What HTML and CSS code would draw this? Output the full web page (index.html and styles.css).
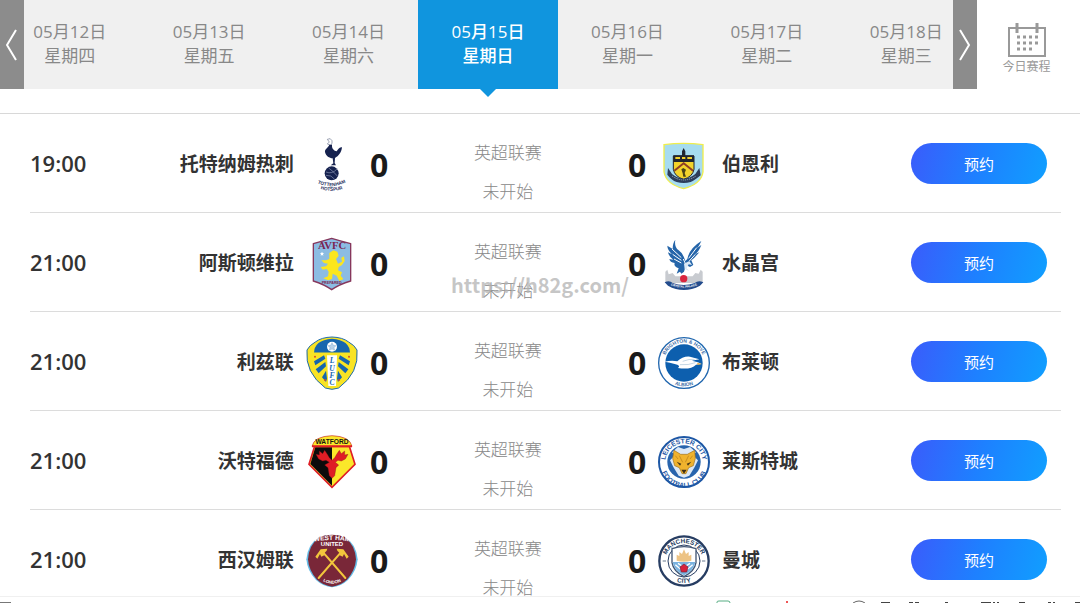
FILE: index.html
```html
<!DOCTYPE html>
<html lang="zh-CN">
<head>
  <meta charset="UTF-8">
  <meta name="viewport" content="width=device-width, initial-scale=1">
  <title>英超赛程</title>
  <link rel="stylesheet" href="styles.css">
</head>
<body>
  <header class="schedule-header">
    <nav class="date-strip">
      <button type="button" class="arrow prev" aria-label="前一周">
        <svg width="12" height="34" viewBox="0 0 12 34"><path d="M10 2 L1 17 L10 32"/></svg>
      </button>
      <div class="dates">
        <a href="#" class="date"><span>05月12日</span><span>星期四</span></a>
        <a href="#" class="date"><span>05月13日</span><span>星期五</span></a>
        <a href="#" class="date"><span>05月14日</span><span>星期六</span></a>
        <a href="#" class="date active"><span>05月15日</span><span>星期日</span></a>
        <a href="#" class="date"><span>05月16日</span><span>星期一</span></a>
        <a href="#" class="date"><span>05月17日</span><span>星期二</span></a>
        <a href="#" class="date"><span>05月18日</span><span>星期三</span></a>
      </div>
      <button type="button" class="arrow next" aria-label="后一周">
        <svg width="12" height="34" viewBox="0 0 12 34"><path d="M1 2 L10 17 L1 32"/></svg>
      </button>
    </nav>
    <a href="#" class="today">
      <svg width="38" height="35" viewBox="0 0 38 35">
        <rect x="1" y="5" width="36" height="28" fill="none" stroke="#999" stroke-width="2"/>
        <path d="M9 0V10M29 0V10" stroke="#999" stroke-width="3"/>
        <path d="M9 14H32M9 20H32M9 26H26" stroke="#999" stroke-width="3" stroke-dasharray="3 3"/>
      </svg>
      <span>今日赛程</span>
    </a>
  </header>

  <main class="matches">
    <div class="match">
      <time>19:00</time>
      <span class="team home">托特纳姆热刺</span>
      <svg class="crest" viewBox="0 0 156 162">
        <g fill="#16224f">
          <path d="M64 4Q74 -2 78 8Q80 16 74 22L64 18L70 12Z" fill="#fff" stroke="#6c7590" stroke-width="2"/>
          <path d="M70 20C66 30 56 32 57 42C60 55 70 60 80 61L82 76L74 82H90L86 75L87 60C98 54 106 44 108 28C100 26 96 34 92 40C84 38 77 32 78 20Z"/>
          <circle cx="77" cy="106" r="21"/>
          <path d="M60 102Q78 110 94 92M68 90Q84 102 94 114M60 112Q76 110 86 124" fill="none" stroke="#8c96b3" stroke-width="2"/>
        </g>
        <path id="spurs1" d="M36 136Q77 154 118 134" fill="none"/>
        <path id="spurs2" d="M38 151Q77 166 116 151" fill="none"/>
        <g class="lettering" font-size="14" fill="#28335e" text-anchor="middle">
          <text><textPath href="#spurs1" startOffset="50%">TOTTENHAM</textPath></text>
          <text><textPath href="#spurs2" startOffset="50%">HOTSPUR</textPath></text>
        </g>
      </svg>
      <strong class="score">0</strong>
      <div class="info"><span>英超联赛</span><span>未开始</span></div>
      <strong class="score">0</strong>
      <svg class="crest" viewBox="0 0 156 162">
        <path d="M18 20Q77 12 135 20V102Q130 138 77 152Q24 138 18 102Z" fill="#a6dcf0" stroke="#f0ee4c" stroke-width="4"/>
        <path d="M46 54H108V94Q104 116 77 124Q50 116 46 94Z" fill="#f3d32c" stroke="#1f2430" stroke-width="3"/>
        <path d="M46 52H108V72H46ZM72 40L77 30L82 40V52H72Z" fill="#22262f"/>
        <path d="M52 60H66M88 60H102M72 60H82" stroke="#f3d32c" stroke-width="6"/>
        <path d="M49 98L77 76L105 98" fill="none" stroke="#8f3f25" stroke-width="6"/>
        <path d="M70 94L76 90L84 95L80 105L84 116H76L74 106Z" fill="#4c4416"/>
        <path d="M30 90L42 108Q77 136 112 108L124 90L128 112Q106 130 98 132Q77 138 56 132Q40 126 28 110Z" fill="#2c3d59"/>
        <path d="M42 114Q77 138 114 114" fill="none" stroke="#aab7c6" stroke-width="3" stroke-dasharray="3 3"/>
      </svg>
      <span class="team">伯恩利</span>
      <button type="button" class="book">预约</button>
    </div>

    <div class="match">
      <time>21:00</time>
      <span class="team home">阿斯顿维拉</span>
      <svg class="crest" viewBox="0 0 156 162">
        <path d="M22 20Q50 12 77 4Q104 12 134 20V132Q100 142 77 158Q54 142 22 132Z" fill="#8cbce3" stroke="#86375c" stroke-width="4"/>
        <text class="serif" x="78" y="36" font-size="32" text-anchor="middle" fill="#7b2450">AVFC</text>
        <path d="M70 48L82 40L94 44L98 56L90 66L96 80L108 74L106 62L114 58L116 72L108 84L98 90L96 100L108 106L104 116L112 126L100 132L92 116L80 110L78 126L66 130L52 124L66 118L68 104L62 96L50 98L44 90L60 88L66 80L54 78L46 70L60 70L70 66Z" fill="#fbe61e"/>
        <path d="M48 44L50 48L54 49L51 52L52 56L48 54L44 56L45 52L42 49L46 48Z" fill="#fff"/>
        <text class="lettering" x="77" y="142" font-size="11" text-anchor="middle" fill="#7b2450">PREPARED</text>
      </svg>
      <strong class="score">0</strong>
      <div class="info"><span>英超联赛</span><span>未开始</span></div>
      <strong class="score">0</strong>
      <svg class="crest" viewBox="0 0 156 162">
        <path d="M22 104L28 98L32 112L44 108L52 118H104L112 108L122 110L128 98L134 104V138H22Z" fill="#c8cbd0"/>
        <g fill="#2565a9">
          <path d="M52 8Q48 30 62 40Q76 50 82 72L88 66Q94 34 130 12Q122 30 116 34L130 24Q122 46 110 52L124 46Q108 64 100 70L106 84L96 90L84 84L78 104L70 110L66 104L56 110L62 94Q46 88 50 78Q36 76 34 66L46 68Q32 58 30 46L42 52Q28 38 28 26L44 36Q44 18 52 8Z"/>
        </g>
        <path d="M42 36L70 62M44 52L70 70M48 66L70 78M92 64L116 32M94 72L112 52M76 66L84 84" fill="none" stroke="#fff" stroke-width="3"/>
        <path d="M78 80L94 72L102 84L92 82L86 94L94 102L80 96Z" fill="#dceaf6"/>
        <circle cx="77" cy="125" r="11" fill="#d9263f"/>
        <path d="M20 136Q34 128 44 138Q77 150 110 138Q122 128 136 136L126 146Q77 172 30 146Z" fill="#234c8d"/>
        <path id="palace" d="M30 141Q77 163 126 141" fill="none"/>
        <text class="lettering" font-size="9" fill="#fff" text-anchor="middle"><textPath href="#palace" startOffset="50%">CRYSTAL PALACE</textPath></text>
      </svg>
      <span class="team">水晶宫</span>
      <button type="button" class="book">预约</button>
    </div>

    <div class="match">
      <time>21:00</time>
      <span class="team home">利兹联</span>
      <svg class="crest" viewBox="0 0 156 162">
        <path d="M78 3Q110 4 128 18Q146 28 153 42Q160 110 98 156Q78 164 58 156Q-4 110 3 42Q10 28 28 18Q46 4 78 3Z" fill="#f8e324" stroke="#1d6bb1" stroke-width="3"/>
        <path d="M24 52Q24 12 78 8Q132 12 132 52Z" fill="#1766ae"/>
        <path d="M22 52H134M60 54L66 156M96 54L90 156" fill="none" stroke="#f8e324" stroke-width="5"/>
        <circle cx="78" cy="32" r="15" fill="#fff"/>
        <path d="M78 20L82 28L90 29L84 35L86 43L78 39L70 43L72 35L66 29L74 28Z" fill="#b9d2e8" stroke="#5a94c5"/>
        <path d="M63 58H93L90 150H67Z" fill="#fff"/>
        <path d="M24 76L54 58L58 68L28 88ZM29 100L58 78L60 91L38 112ZM48 124L60 104L63 128L60 138ZM132 76L102 58L98 68L128 88ZM127 100L98 78L96 91L118 112ZM108 124L96 104L93 128L96 138Z" fill="#1766ae"/>
        <g class="serif" font-size="23" fill="#1766ae" text-anchor="middle" font-style="italic">
          <text x="78" y="82">L</text><text x="78" y="104">U</text><text x="78" y="125">F</text><text x="78" y="147">C</text>
        </g>
        <g fill="#d44b28"><circle cx="27" cy="62" r="3"/><circle cx="129" cy="62" r="3"/><circle cx="57" cy="132" r="3"/><circle cx="99" cy="132" r="3"/></g>
      </svg>
      <strong class="score">0</strong>
      <div class="info"><span>英超联赛</span><span>未开始</span></div>
      <strong class="score">0</strong>
      <svg class="crest" viewBox="0 0 156 162">
        <circle cx="78" cy="81" r="76" fill="#fff" stroke="#2066ae" stroke-width="4"/>
        <circle cx="78" cy="81" r="56" fill="#0d5fae"/>
        <path d="M20 77Q42 72 58 76Q74 60 96 62L124 70Q112 72 102 74L120 79L130 84L114 86Q98 102 60 96Q70 88 50 84Q36 80 20 77Z" fill="#fff"/>
        <path d="M66 86Q92 88 112 80M74 76Q94 68 110 70" fill="none" stroke="#a8c2d8" stroke-width="2"/>
        <path d="M118 80L132 84L118 87Z" fill="#e6b04c"/>
        <path id="brighton1" d="M17 81A61 61 0 0 1 139 81" fill="none"/>
        <path id="brighton2" d="M8 81A70 70 0 0 0 148 81" fill="none"/>
        <g class="lettering" font-size="15" fill="#3b6ca6" text-anchor="middle">
          <text><textPath href="#brighton1" startOffset="50%">BRIGHTON &amp; HOVE</textPath></text>
          <text><textPath href="#brighton2" startOffset="50%">ALBION</textPath></text>
        </g>
      </svg>
      <span class="team">布莱顿</span>
      <button type="button" class="book">预约</button>
    </div>

    <div class="match">
      <time>21:00</time>
      <span class="team home">沃特福德</span>
      <svg class="crest" viewBox="0 0 156 162">
        <path d="M26 34L9 88L78 157L147 88L130 34Z" fill="#fbe72a" stroke="#df1d25" stroke-width="5"/>
        <path d="M28 37L13 87L78 152V37Z" fill="#0c0b0b"/>
        <path d="M70 82L60 76L50 78L38 72L30 58L40 60L40 48L50 56L56 46L64 58L70 68L78 76L86 68L92 58L100 46L106 56L116 48L116 60L126 58L118 72L106 78L96 76L88 82L98 90L90 98L86 122L78 130L70 122L66 98L56 90Z" fill="#df1d25" stroke="#7c1514" stroke-width="1"/>
        <path d="M18 34Q24 4 78 2Q132 4 138 34Z" fill="#fbe72a" stroke="#c62924" stroke-width="2"/>
        <path d="M18 34H138" stroke="#df1d25" stroke-width="6"/>
        <text class="lettering" x="78" y="28" font-size="20" fill="#171410" text-anchor="middle">WATFORD</text>
      </svg>
      <strong class="score">0</strong>
      <div class="info"><span>英超联赛</span><span>未开始</span></div>
      <strong class="score">0</strong>
      <svg class="crest" viewBox="0 0 156 162">
        <circle cx="78" cy="81" r="75" fill="#fff" stroke="#1d57a5" stroke-width="6"/>
        <circle cx="78" cy="81" r="50" fill="#2864ad"/>
        <path d="M42 52L60 36L78 42L96 36L114 52L104 60L120 76L110 96L94 122L78 128L62 122L46 96L36 76L52 60Z" fill="#dce8f5"/>
        <path d="M48 46L68 58H88L110 46L112 70L106 92L92 98L84 116H72L64 98L50 92L44 70Z" fill="#f0b32e" stroke="#9e7120" stroke-width="2"/>
        <path d="M56 80L70 86L66 92ZM100 80L86 86L90 92Z" fill="#4d3a18"/>
        <path d="M70 104H86L78 116Z" fill="#3a2c17"/>
        <path d="M64 62L74 82M92 62L82 82M52 62L60 72M104 62L96 72" stroke="#b57b1b" stroke-width="2"/>
        <path id="leicester1" d="M22 81A56 56 0 0 1 134 81" fill="none"/>
        <path id="leicester2" d="M7 86A71 71 0 0 0 149 86" fill="none"/>
        <g class="lettering" font-size="20" fill="#1d57a5" text-anchor="middle">
          <text><textPath href="#leicester1" startOffset="50%">LEICESTER CITY</textPath></text>
          <text><textPath href="#leicester2" startOffset="50%">FOOTBALL CLUB</textPath></text>
        </g>
      </svg>
      <span class="team">莱斯特城</span>
      <button type="button" class="book">预约</button>
    </div>

    <div class="match">
      <time>21:00</time>
      <span class="team home">西汉姆联</span>
      <svg class="crest" viewBox="0 0 156 162">
        <path d="M40 10Q78 -4 116 10Q150 28 155 76Q152 112 126 138Q104 158 78 160Q52 158 30 138Q4 112 1 76Q6 28 40 10Z" fill="#65bce7"/>
        <path d="M40 8Q78 -4 116 8Q148 34 150 76Q148 108 124 136Q104 156 78 158Q52 156 32 136Q8 108 6 76Q8 34 40 8Z" fill="#792738"/>
        <path d="M38 132L104 56M118 132L52 56" stroke="#f2c63c" stroke-width="6" stroke-linecap="round"/>
        <path d="M28 68L44 46L64 44L62 50L56 56L58 62L46 68L42 60L34 74ZM128 68L112 46L92 44L94 50L100 56L98 62L110 68L114 60L122 74Z" fill="#f2c63c"/>
        <path id="westham1" d="M16 24Q78 12 140 24" fill="none"/>
        <path id="westham2" d="M44 138Q78 160 112 138" fill="none"/>
        <g class="lettering" fill="#fff" text-anchor="middle">
          <text font-size="20"><textPath href="#westham1" startOffset="50%">WEST HAM</textPath></text>
          <text x="78" y="37" font-size="18">UNITED</text>
          <text font-size="13"><textPath href="#westham2" startOffset="50%">LONDON</textPath></text>
        </g>
      </svg>
      <strong class="score">0</strong>
      <div class="info"><span>英超联赛</span><span>未开始</span></div>
      <strong class="score">0</strong>
      <svg class="crest" viewBox="0 0 156 162">
        <circle cx="78" cy="81" r="74" fill="#fff" stroke="#273d62" stroke-width="7"/>
        <circle cx="78" cy="81" r="48" fill="#fff" stroke="#273d62" stroke-width="3"/>
        <path d="M42 44Q78 32 114 44V86Q110 112 78 128Q46 112 42 86Z" fill="#fff" stroke="#435775" stroke-width="4"/>
        <path d="M44 84H112Q108 110 78 124Q48 110 44 84Z" fill="#79b2df"/>
        <path d="M56 80V62L64 66V54L72 60L78 46L84 60L92 54V66L100 62V80Q78 86 56 80Z" fill="#edc384"/>
        <path d="M52 92L68 106M104 92L88 106M60 88L72 96M96 88L84 96" stroke="#fff" stroke-width="4"/>
        <path d="M78 90L90 99L86 114H70L66 99Z" fill="#d6213b" stroke="#7a1e33" stroke-width="2"/>
        <path id="city1" d="M21 84A57 57 0 0 1 135 84" fill="none"/>
        <path id="city2" d="M9 78A69 69 0 0 0 147 78" fill="none"/>
        <path d="M14 81H24M132 81H142" stroke="#9ba6b5" stroke-width="5"/>
        <g class="lettering" font-size="19" fill="#273d62" text-anchor="middle">
          <text><textPath href="#city1" startOffset="50%">MANCHESTER</textPath></text>
          <text><textPath href="#city2" startOffset="50%">CITY</textPath></text>
        </g>
      </svg>
      <span class="team">曼城</span>
      <button type="button" class="book">预约</button>
    </div>
    <span class="watermark">https://h82g.com/</span>
  </main>

  <footer class="toolbar">
    <svg width="12" height="6" viewBox="0 0 12 6"><path d="M0 5H11V6H0Z" fill="#777"/></svg>
    <svg width="364" height="6" viewBox="0 0 364 6">
      <path d="M1 6V5Q1 4 3 4H12Q14 4 14 6" fill="none" stroke="#57ad83"/>
      <path d="M71 4V6" stroke="#ef5555" stroke-width="2"/>
      <path d="M137 6Q143 2 149 6" fill="none" stroke="#666"/>
      <path d="M165 6H174M193 6H197M199 6H203M229 6H232M265 6H275M277 6H279M281 6H283M303 6H309M332 6H335M337 6H339M359 6H364" stroke="#444" stroke-width="2"/>
    </svg>
  </footer>
</body>
</html>
```
FILE: styles.css
```css
* {
  box-sizing: border-box;
}

body {
  margin: 0;
  height: 100vh;
  display: flex;
  flex-direction: column;
  overflow: hidden;
  background: #fff;
  color: #333;
  font-family: "Open Sans", "Noto Sans CJK SC", sans-serif;
}

a {
  color: inherit;
  text-decoration: none;
}

button {
  border: 0;
  padding: 0;
  font-family: inherit;
  cursor: pointer;
}

/* date picker */
.schedule-header {
  display: flex;
  flex: none;
  padding-bottom: 24px;
  border-bottom: 1px solid #d8d8d8;
}

.date-strip {
  position: relative;
  flex: 1;
  background: #f0f0f0;
}

.dates {
  display: grid;
  grid-template-columns: repeat(7, 1fr);
  margin-right: 1px;
}

.date {
  position: relative;
  display: flex;
  flex-direction: column;
  align-items: center;
  height: 89px;
  padding-top: 20px;
  font-size: 17px;
  line-height: 24px;
  color: #888;
}

.date.active {
  background: #1095de;
  color: #fff;
  font-weight: 500;
}

.date.active::after {
  content: "";
  position: absolute;
  top: 100%;
  left: 50%;
  margin-left: -8px;
  border: 8px solid transparent;
  border-top-color: #1095de;
  border-bottom: 0;
}

.arrow {
  position: absolute;
  z-index: 1;
  top: 0;
  bottom: 0;
  width: 24px;
  display: flex;
  align-items: center;
  justify-content: center;
  background: #8c8c8c;
}

.arrow.prev {
  left: 0;
}

.arrow.next {
  right: 0;
}

.arrow path {
  fill: none;
  stroke: #fff;
  stroke-width: 2;
}

.today {
  display: flex;
  flex-direction: column;
  align-items: center;
  width: 103px;
  padding: 23px 4px 0 0;
  font-size: 12px;
  line-height: 18px;
  color: #999;
}

/* match list */
.matches {
  position: relative;
  flex: 1;
  min-height: 0;
  overflow: hidden;
  padding: 0 19px 0 30px;
}

.match {
  display: grid;
  grid-template-columns: 60px 13fr 52px 18px 216px 18px 52px 12fr 136px;
  column-gap: 12px;
  align-items: center;
  height: 99px;
  padding-right: 14px;
  border-bottom: 1px solid #dcdcdc;
}

.match time {
  font-size: 22px;
  line-height: 30px;
  font-weight: 600;
}

.team {
  font-size: 19px;
  font-weight: 700;
  white-space: nowrap;
}

.home {
  text-align: right;
}

.crest {
  display: block;
  width: 52px;
  height: 54px;
  margin-top: 4px;
}

.lettering {
  font-family: "Liberation Sans", sans-serif;
  font-weight: 700;
}

.serif {
  font-family: "Liberation Serif", serif;
  font-weight: 700;
}

.score {
  font-size: 32px;
  line-height: 40px;
  color: #1a1a1a;
  margin-top: 4px;
}

.info {
  display: flex;
  flex-direction: column;
  align-self: end;
  align-items: center;
  padding-bottom: 1px;
  font-size: 17px;
  font-weight: 300;
  line-height: 39px;
  color: #888;
}

.book {
  height: 41px;
  border-radius: 21px;
  background: linear-gradient(105deg, #3a5cfb, #1e80ff 50%, #109fff);
  color: #fff;
  font-size: 15px;
}

.watermark {
  position: absolute;
  top: 157px;
  left: 50%;
  transform: translateX(-50%);
  font-family: "Noto Sans CJK SC", sans-serif;
  font-size: 20px;
  font-weight: 700;
  line-height: 28px;
  color: rgba(180, 180, 180, 0.75);
}

.toolbar {
  display: flex;
  flex: none;
  justify-content: space-between;
  border-top: 1px solid #f0f0f0;
}
```
